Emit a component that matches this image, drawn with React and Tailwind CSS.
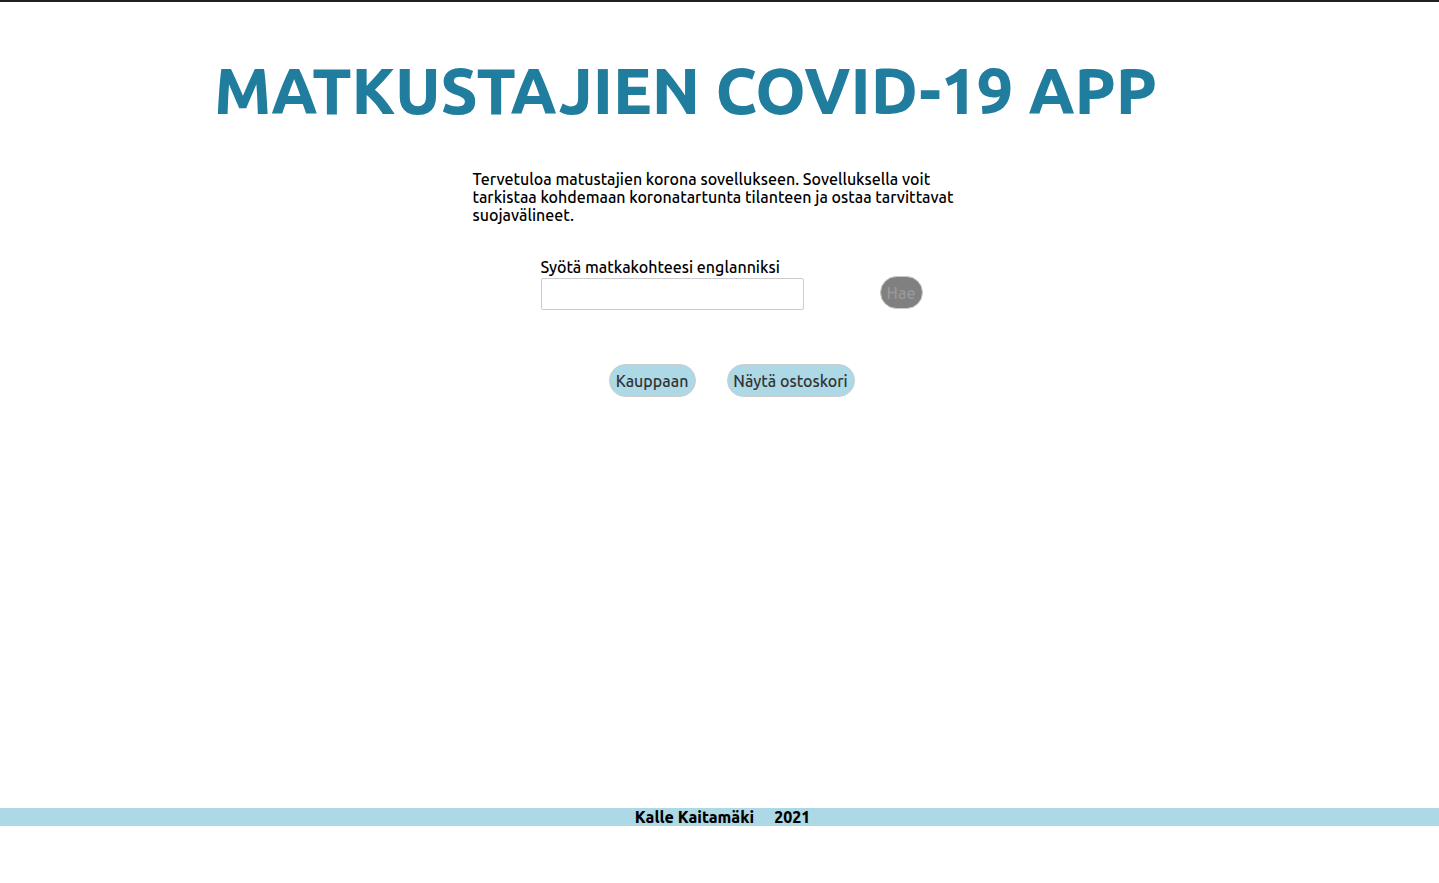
export default function App() {
  return (
    <div className="flex min-h-screen flex-col border-t-2 border-[#202125] bg-white text-black font-['Ubuntu','Open_Sans','Noto_Sans',sans-serif] font-medium">
      <header className="flex justify-center pt-12 pr-17">
        <h1 className="whitespace-nowrap text-[64px] leading-[80px] font-extrabold text-[#217d9e]">MATKUSTAJIEN COVID-19 APP</h1>
      </header>
      <main className="flex flex-1 flex-col items-center pt-10">
        <p className="w-[494px] text-base leading-[18px]">
          Tervetuloa matustajien korona sovellukseen. Sovelluksella voit tarkistaa kohdemaan koronatartunta tilanteen ja ostaa tarvittavat suojavälineet.
        </p>
        <form className="mt-[34px] ml-6 flex items-end gap-[76px]">
          <div className="flex flex-col gap-0.5">
            <label htmlFor="destination" className="text-base leading-[18px]">Syötä matkakohteesi englanniksi</label>
            <input id="destination" type="text" className="h-8 w-[263px] rounded-xs border border-[#ccc] px-2" />
          </div>
          <button type="submit" disabled className="mb-px h-[33px] w-[43px] rounded-full border border-[#ccc] bg-[#808080] text-[#999]">Hae</button>
        </form>
        <nav className="mt-[54px] ml-6 flex gap-[31px]">
          <button type="button" className="h-[33px] w-[87px] rounded-full border border-[#ccc] bg-[#add8e6] text-[#333]">Kauppaan</button>
          <button type="button" className="h-[33px] w-[128px] rounded-full border border-[#ccc] bg-[#add8e6] text-[#333]">Näytä ostoskori</button>
        </nav>
      </main>
      <footer className="mb-[57px] flex justify-center gap-5 bg-[#add8e6] pl-1.5 text-base leading-[18px] font-extrabold">
        <span>Kalle Kaitamäki</span>
        <span>2021</span>
      </footer>
    </div>
  )
}
